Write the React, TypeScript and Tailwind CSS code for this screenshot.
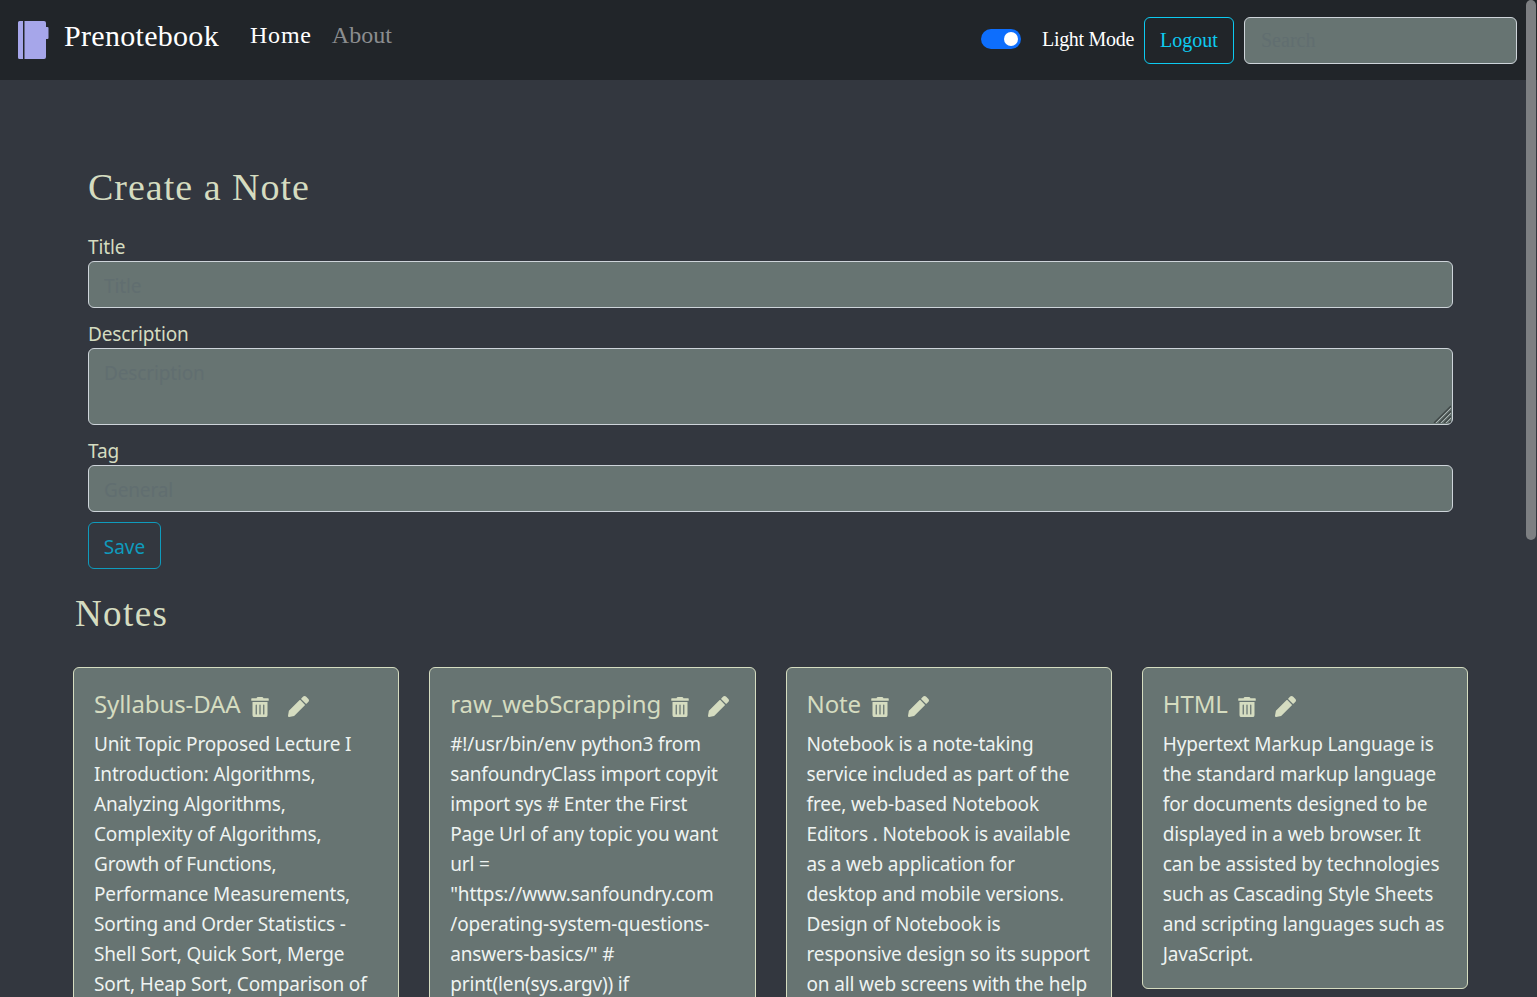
import React from "react";

const serif = "font-['Liberation_Serif',serif]";

const notes = [
  {
    title: "Syllabus-DAA",
    lines: ["Unit Topic Proposed Lecture I", "Introduction: Algorithms,", "Analyzing Algorithms,", "Complexity of Algorithms,", "Growth of Functions,", "Performance Measurements,", "Sorting and Order Statistics -", "Shell Sort, Quick Sort, Merge", "Sort, Heap Sort, Comparison of"],
  },
  {
    title: "raw_webScrapping",
    lines: ["#!/usr/bin/env python3 from", "sanfoundryClass import copyit", "import sys # Enter the First", "Page Url of any topic you want", "url =", "\"https://www.sanfoundry.com", "/operating-system-questions-", "answers-basics/\" #", "print(len(sys.argv)) if"],
  },
  {
    title: "Note",
    lines: ["Notebook is a note-taking", "service included as part of the", "free, web-based Notebook", "Editors . Notebook is available", "as a web application for", "desktop and mobile versions.", "Design of Notebook is", "responsive design so its support", "on all web screens with the help"],
  },
  {
    title: "HTML",
    lines: ["Hypertext Markup Language is", "the standard markup language", "for documents designed to be", "displayed in a web browser. It", "can be assisted by technologies", "such as Cascading Style Sheets", "and scripting languages such as", "JavaScript."],
  },
];

const TrashIcon = () => (
  <svg viewBox="0 0 448 512" className="w-[18px] h-[20px] fill-[#d5dcc0]">
    <path d="M32 464a48 48 0 0 0 48 48h288a48 48 0 0 0 48-48V128H32zm272-256a16 16 0 0 1 32 0v224a16 16 0 0 1-32 0zm-96 0a16 16 0 0 1 32 0v224a16 16 0 0 1-32 0zm-96 0a16 16 0 0 1 32 0v224a16 16 0 0 1-32 0zM432 32H312l-9.400-18.700A24 24 0 0 0 281.100 0H166.800a23.700 23.700 0 0 0-21.400 13.300L136 32H16A16 16 0 0 0 0 48v32a16 16 0 0 0 16 16h416a16 16 0 0 0 16-16V48a16 16 0 0 0-16-16z" />
  </svg>
);

const PencilIcon = () => (
  <svg viewBox="0 0 512 512" className="w-[21px] h-[21px] fill-[#d5dcc0]">
    <path d="M497.900 142.100l-46.100 46.100c-4.700 4.700-12.300 4.700-17 0l-111-111c-4.700-4.700-4.700-12.300 0-17l46.100-46.100c18.700-18.700 49.100-18.700 67.900 0l60.100 60.100c18.800 18.700 18.800 49.100 0 67.900zM284.200 99.800L21.600 362.400.4 483.900c-2.900 16.400 11.400 30.600 27.800 27.800l121.500-21.300 262.600-262.600c4.700-4.700 4.700-12.300 0-17l-111-111c-4.800-4.700-12.400-4.700-17.100 0z" />
  </svg>
);

const App: React.FC = () => {
  return (
    <div className="relative h-[997px] overflow-hidden bg-[#33373f] font-['Noto_Sans',sans-serif]">
      {/* Navbar */}
      <nav className={`flex items-center h-20 bg-[#212529] pl-[18px] pr-5 ${serif}`}>
        <svg viewBox="0 0 31 38" className="w-[31px] h-[38px] fill-[#a6a6ea]">
          <path d="M1.500 0H5v38H1.500A1.500 1.500 0 0 1 0 36.500V1.500A1.500 1.500 0 0 1 1.500 0z" />
          <path d="M6.500 0H26a2 2 0 0 1 2 2v4h1.500a1 1 0 0 1 1 1v10a1 1 0 0 1-1 1H28v18a2 2 0 0 1-2 2H6.500z" />
        </svg>
        <span className="ml-[15px] text-[30px] tracking-[0.3px] text-white -mt-[10px]">Prenotebook</span>
        <a className="ml-[31px] text-[24px] tracking-[0.8px] text-white -mt-[10px]">Home</a>
        <a className="ml-[20px] text-[24px] text-[#8b8d8f] -mt-[10px]">About</a>
        <div className="ml-auto flex items-center">
          <div className="flex items-center justify-end w-10 h-5 rounded-full bg-[#0d6efd] px-[3px] -mt-[2px]">
            <div className="w-[14px] h-[14px] rounded-full bg-white" />
          </div>
          <span className="ml-[21px] text-[20px] tracking-[-0.3px] text-white -mt-[2px]">Light Mode</span>
          <button className="ml-[10px] w-[90px] h-[47px] rounded-[6px] border border-[#0dcaf0] text-[20px] text-[#0dcaf0]">Logout</button>
          <input
            placeholder="Search"
            className="ml-[10px] w-[273px] h-[47px] rounded-[6px] border border-[#ced4da] bg-[#677472] px-4 text-[20px] placeholder:text-[#616e70] outline-none"
          />
        </div>
      </nav>

      <main>
        {/* Add note form */}
        <section className="ml-[88px] w-[1365px] pt-[80px]">
          <h1 className={`text-[38px] tracking-[1px] leading-[54px] text-[#d5dcc0] ${serif}`}>Create a Note</h1>
          <label className="block mt-[19px] text-[19px] tracking-[-0.15px] leading-[28px] text-[#d5dcc0]">Title</label>
          <input
            placeholder="Title"
            className="block w-full h-[47px] rounded-[6px] border border-[#ced4da] bg-[#677472] px-[15px] pt-[2px] text-[19px] tracking-[-0.15px] placeholder:text-[#616e70] outline-none"
          />
          <label className="block mt-[12px] text-[19px] tracking-[-0.15px] leading-[28px] text-[#d5dcc0]">Description</label>
          <div className="relative">
            <textarea
              placeholder="Description"
              className="block w-full h-[77px] resize-none rounded-[6px] border border-[#ced4da] bg-[#677472] px-[15px] pt-[10px] text-[19px] tracking-[-0.15px] placeholder:text-[#616e70] outline-none"
            />
            {/* resize grip */}
            <svg viewBox="0 0 18 18" className="absolute right-[2px] bottom-[2px] w-[18px] h-[18px]">
              <path d="M1 18L18 1M6 18L18 6M11 18L18 11M16 18l2-2" stroke="#3f4645" strokeWidth="1.300" fill="none" />
              <path d="M3 18L18 3M8 18L18 8M13 18l5-5" stroke="#aab3b1" strokeWidth="1" fill="none" />
            </svg>
          </div>
          <label className="block mt-[12px] text-[19px] tracking-[-0.15px] leading-[28px] text-[#d5dcc0]">Tag</label>
          <input
            placeholder="General"
            className="block w-full h-[47px] rounded-[6px] border border-[#ced4da] bg-[#677472] px-[15px] pt-[2px] text-[19px] tracking-[-0.15px] placeholder:text-[#616e70] outline-none"
          />
          <button className="block mt-[10px] w-[73px] h-[47px] rounded-[6px] border border-[#0f9bbd] pt-[3px] text-[19px] text-[#0f9bbd]">Save</button>
        </section>

        {/* Notes list */}
        <section className="ml-[73px] w-[1395px] mt-[18px]">
          <h2 className={`ml-[2px] text-[37px] tracking-[1.400px] leading-[54px] text-[#d5dcc0] ${serif}`}>Notes</h2>
          <div className="mt-[26px] grid grid-cols-4 gap-x-[30px] items-start">
            {notes.map((note) => (
              <div key={note.title} className="rounded-[6px] border border-[#d5dcc0] bg-[#677472] px-5 pt-[19px] pb-[19px]">
                <div className="flex items-center h-[36px]">
                  <span className="text-[24px] tracking-[-0.1px] text-[#d5dcc0] -mt-[2px]">{note.title}</span>
                  <span className="ml-[10px] mt-[3px]"><TrashIcon /></span>
                  <span className="ml-[19px] mt-[3px]"><PencilIcon /></span>
                </div>
                <p className="mt-[6px] text-[19px] tracking-[-0.15px] leading-[30px] text-[#eef3f1]">
                  {note.lines.map((line) => (
                    <span key={line} className="block whitespace-nowrap">{line}</span>
                  ))}
                </p>
              </div>
            ))}
          </div>
        </section>
      </main>

      {/* Scrollbar thumb */}
      <div className="absolute top-0 right-[1px] w-[10px] h-[540px] rounded-full bg-[#7d7f82]" />
    </div>
  );
};

export default App;
